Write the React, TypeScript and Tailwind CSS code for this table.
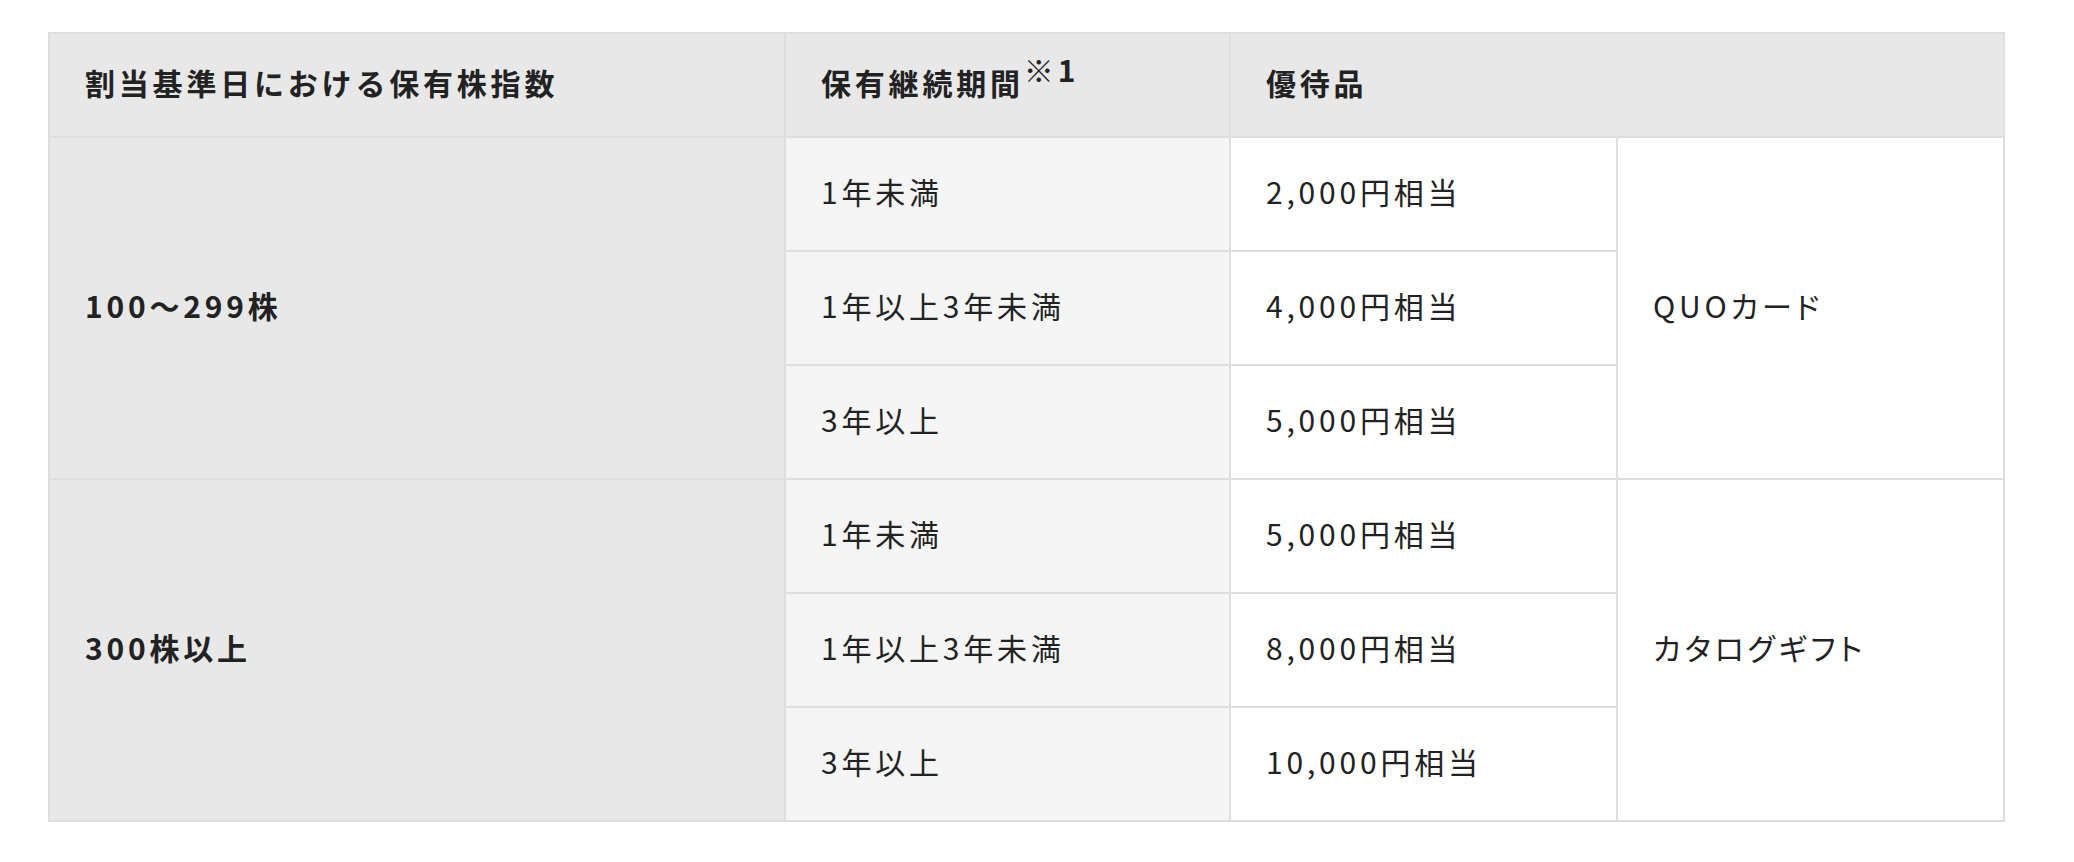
import React from 'react';

type Row = { period: string; value: string };

const groups: { shares: string; gift: string; rows: Row[] }[] = [
  {
    shares: '100〜299株',
    gift: 'QUOカード',
    rows: [
      { period: '1年未満', value: '2,000円相当' },
      { period: '1年以上3年未満', value: '4,000円相当' },
      { period: '3年以上', value: '5,000円相当' },
    ],
  },
  {
    shares: '300株以上',
    gift: 'カタログギフト',
    rows: [
      { period: '1年未満', value: '5,000円相当' },
      { period: '1年以上3年未満', value: '8,000円相当' },
      { period: '3年以上', value: '10,000円相当' },
    ],
  },
];

const cell = 'border-2 border-[#dedede] pl-[35px] pr-[20px] pb-[6px] text-left align-middle';

export default function App() {
  return (
    <div
      className="min-h-screen bg-white pl-[48px] pt-[32px] text-[#222] text-[30px] tracking-[3.8px] leading-[1.5]"
      style={{ fontFamily: '"Noto Sans CJK JP", "Noto Sans", sans-serif' }}
    >
      <table className="w-[1955px] table-fixed border-collapse">
        <colgroup>
          <col className="w-[736px]" />
          <col className="w-[445px]" />
          <col className="w-[387px]" />
          <col className="w-[387px]" />
        </colgroup>
        <thead>
          <tr className="h-[104px] bg-[#e8e8e8]">
            <th className={`${cell} font-bold`}>割当基準日における保有株指数</th>
            <th className={`${cell} font-bold`}>
              保有継続期間
              <span className="relative -top-[13px] font-normal">※</span>
              <span className="relative -top-[13px]">1</span>
            </th>
            <th className={`${cell} font-bold`} colSpan={2}>
              優待品
            </th>
          </tr>
        </thead>
        <tbody>
          {groups.map((g) =>
            g.rows.map((r, i) => (
              <tr key={g.shares + i} className="h-[114px]">
                {i === 0 && (
                  <td className={`${cell} bg-[#e8e8e8] font-bold`} rowSpan={g.rows.length}>
                    {g.shares}
                  </td>
                )}
                <td className={`${cell} bg-[#f5f5f5]`}>{r.period}</td>
                <td className={`${cell} bg-white`}>{r.value}</td>
                {i === 0 && (
                  <td
                    className={`${cell} bg-white [font-feature-settings:'palt']`}
                    rowSpan={g.rows.length}
                  >
                    {g.gift}
                  </td>
                )}
              </tr>
            ))
          )}
        </tbody>
      </table>
    </div>
  );
}
